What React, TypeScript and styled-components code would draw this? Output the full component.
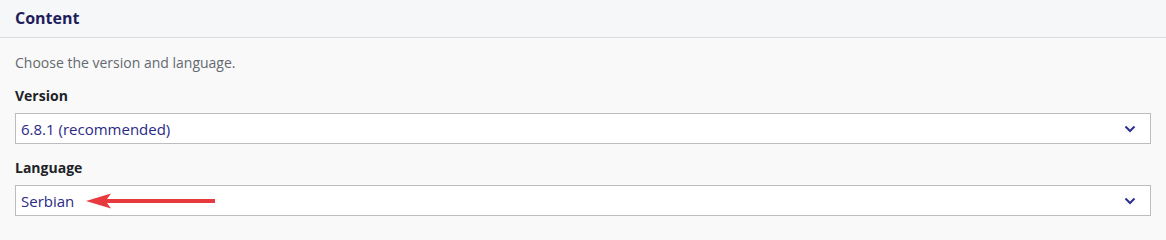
import React, { FC } from "react";
import styled, { createGlobalStyle } from "styled-components";

const GlobalStyle = createGlobalStyle`
  html, body {
    margin: 0;
    padding: 0;
    background: #f9f9f9;
    font-family: "Open Sans", "Noto Sans", sans-serif;
  }
`;

interface ISelectProps {
  value: string;
  showArrow?: boolean;
}

const Chevron: FC = () => (
  <svg width="12" height="8" viewBox="0 0 12 8">
    <path d="M1.5 1.5 L6 6 L10.5 1.5" fill="none" stroke="#2f2f8f" strokeWidth="2" />
  </svg>
);

const PointerArrow: FC = () => (
  <svg width="129" height="16" viewBox="0 0 129 16">
    <path d="M0 8 L25 0.5 L21 6 L129 6 L129 10 L21 10 L25 15.5 Z" fill="#e8393e" />
  </svg>
);

const FakeSelect: FC<ISelectProps> = ({ value, showArrow }) => (
  <SelectBox>
    <SelectValue>{value}</SelectValue>
    {showArrow && <PointerArrow />}
    <ChevronWrap>
      <Chevron />
    </ChevronWrap>
  </SelectBox>
);

const App: FC = () => {
  return (
    <>
      <GlobalStyle />
      <Panel>
        <Header>
          <Title>Content</Title>
        </Header>
        <Body>
          <Description>Choose the version and language.</Description>
          <Field>
            <Label>Version</Label>
            <FakeSelect value="6.8.1 (recommended)" />
          </Field>
          <Field>
            <Label>Language</Label>
            <FakeSelect value="Serbian" showArrow />
          </Field>
        </Body>
      </Panel>
    </>
  );
};

export default App;

const Panel = styled.div`
  width: 1166px;
  height: 231px;
  background: #f9f9f9;
  overflow: hidden;
`;

const Header = styled.div`
  height: 38px;
  padding: 0 15px;
  display: flex;
  align-items: center;
  background: #f6f7f8;
  border-bottom: 1px solid #dcdcde;
  box-sizing: border-box;
`;

const Title = styled.h2`
  margin: 0;
  font-size: 16px;
  font-weight: 700;
  color: #1e1e5c;
  line-height: 20px;
  padding-bottom: 2px;
`;

const Body = styled.div`
  padding: 15px 15px 0 15px;
  display: flex;
  flex-direction: column;
`;

const Description = styled.p`
  margin: 0 0 13px 0;
  font-size: 14px;
  line-height: 20px;
  color: #646970;
`;

const Field = styled.div`
  display: flex;
  flex-direction: column;
  gap: 7px;
  margin-bottom: 14px;
`;

const Label = styled.div`
  font-size: 14px;
  font-weight: 700;
  line-height: 20px;
  color: #1d2327;
`;

const SelectBox = styled.div`
  width: 1136px;
  height: 31px;
  box-sizing: border-box;
  border: 1px solid #bdbdbd;
  background: #ffffff;
  display: flex;
  align-items: center;
  padding: 0 14px 0 5px;
`;

const SelectValue = styled.span`
  font-size: 15px;
  color: #2a2a86;
  margin-right: 12px;
`;

const ChevronWrap = styled.span`
  margin-left: auto;
  display: flex;
  align-items: center;
  padding-top: 1px;
`;
